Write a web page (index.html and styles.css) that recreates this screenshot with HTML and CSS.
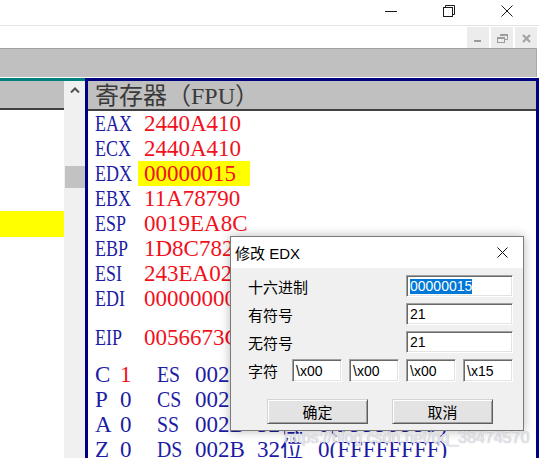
FILE: index.html
```html
<!DOCTYPE html>
<html lang="zh">
<head>
<meta charset="utf-8">
<title>OllyDbg 修改 EDX</title>
<link rel="stylesheet" href="styles.css">
</head>
<body>
<div class="titlebar">
  <span class="capbtn"><svg width="12" height="12" viewBox="0 0 12 12"><path d="M0 6.5H12" stroke="#1a1a1a" stroke-width="1"/></svg></span>
  <span class="capbtn"><svg width="12" height="12" viewBox="0 0 12 12"><rect x="0.5" y="2.5" width="9" height="9" fill="none" stroke="#1a1a1a"/><path d="M2.5 2.5V0.5H11.5V9.5H9.5" fill="none" stroke="#1a1a1a"/></svg></span>
  <span class="capbtn"><svg width="12" height="12" viewBox="0 0 12 12"><path d="M0.5 0.5L11.5 11.5M11.5 0.5L0.5 11.5" stroke="#1a1a1a" stroke-width="1"/></svg></span>
</div>
<div class="mdibar">
  <span class="mdibtn"><svg width="22" height="21" viewBox="0 0 22 21"><rect x="7" y="13" width="7" height="2" fill="#9c9c9c"/></svg></span>
  <span class="mdibtn"><svg width="22" height="21" viewBox="0 0 22 21"><path d="M9.5 9V7.5H16.5V12.5H14" fill="none" stroke="#9c9c9c"/><rect x="9" y="7" width="8" height="2" fill="#9c9c9c"/><rect x="6.5" y="10.5" width="7" height="5" fill="#ececec" stroke="#9c9c9c"/><rect x="6" y="10" width="8" height="2" fill="#9c9c9c"/></svg></span>
  <span class="mdibtn"><svg width="22" height="21" viewBox="0 0 22 21"><path d="M8 8L15 15M15 8L8 15" stroke="#a4a4a4" stroke-width="2.2"/></svg></span>
</div>
<div class="toolbar"></div>
<div class="main">
  <div class="leftpane">
    <div class="list">
      <div class="list-head"></div>
      <div class="list-hl"></div>
    </div>
    <div class="vscroll">
      <div class="vs-arrow"><svg width="10" height="6" viewBox="0 0 10 6"><path d="M1 5.5L5 1.5L9 5.5" fill="none" stroke="#505050" stroke-width="2"/></svg></div>
      <div class="vs-thumb"></div>
    </div>
  </div>
  <div class="regpane">
    <div class="reg-head">寄存器（FPU）</div>
    <div class="reg-body">
      <div class="row"><span class="lbl">EAX</span><span class="val">2440A410</span></div>
      <div class="row"><span class="lbl">ECX</span><span class="val">2440A410</span></div>
      <div class="row"><span class="lbl">EDX</span><span class="val hl">00000015</span></div>
      <div class="row"><span class="lbl">EBX</span><span class="val">11A78790</span></div>
      <div class="row"><span class="lbl">ESP</span><span class="val">0019EA8C</span></div>
      <div class="row"><span class="lbl">EBP</span><span class="val">1D8C7828</span></div>
      <div class="row"><span class="lbl">ESI</span><span class="val">243EA020</span></div>
      <div class="row"><span class="lbl">EDI</span><span class="val">00000000</span></div>
      <div class="row eip"><span class="lbl">EIP</span><span class="val">0056673C</span></div>
      <div class="frow-reg first"><span>C</span><span class="red">1</span><span class="seg">ES</span><span>002B</span><span>32位</span><span>0(FFFFFFFF)</span></div>
      <div class="frow-reg"><span>P</span><span>0</span><span class="seg">CS</span><span>0023</span><span>32位</span><span>0(FFFFFFFF)</span></div>
      <div class="frow-reg"><span>A</span><span>0</span><span class="seg">SS</span><span>002B</span><span>32位</span><span>0(FFFFFFFF)</span></div>
      <div class="frow-reg"><span>Z</span><span>0</span><span class="seg">DS</span><span>002B</span><span>32位</span><span>0(FFFFFFFF)</span></div>
    </div>
  </div>
</div>

<div class="dialog">
  <div class="dlg-title">
    <span class="dlg-caption">修改 EDX</span>
    <svg class="dlg-close" width="11" height="11" viewBox="0 0 11 11"><path d="M0.5 0.5L10.5 10.5M10.5 0.5L0.5 10.5" stroke="#111" stroke-width="1"/></svg>
  </div>
  <div class="dlg-body">
    <div class="frow"><span class="flabel">十六进制</span><div class="field wide"><span class="sel">00000015</span></div></div>
    <div class="frow"><span class="flabel">有符号</span><div class="field wide">21</div></div>
    <div class="frow last"><span class="flabel">无符号</span><div class="field wide">21</div></div>
    <div class="crow">
      <span class="clabel">字符</span>
      <div class="cfields">
        <div class="field ch">\x00</div>
        <div class="field ch">\x00</div>
        <div class="field ch">\x00</div>
        <div class="field ch">\x15</div>
      </div>
    </div>
    <div class="btnrow">
      <button class="btn">确定</button>
      <button class="btn">取消</button>
    </div>
  </div>
</div>

<div class="watermark">https://blog.csdn.net/qq_38474570</div>
</body>
</html>
```

FILE: styles.css
```css
* { box-sizing: border-box; }
html, body { margin: 0; padding: 0; }
body {
  width: 539px;
  height: 458px;
  overflow: hidden;
  position: relative;
  background: #fff;
  font-family: "Liberation Sans", "Noto Sans CJK SC", sans-serif;
}

/* window caption */
.titlebar {
  height: 26px;
  border-bottom: 1px solid #e3e3e3;
  display: flex;
  justify-content: flex-end;
  padding-right: 3px;
}
.capbtn {
  width: 58px;
  height: 21px;
  display: flex;
  align-items: center;
  justify-content: center;
}
.capbtn svg { display: block; }

/* MDI child buttons */
.mdibar {
  height: 22px;
  display: flex;
  justify-content: flex-end;
  gap: 2px;
  padding-top: 1px;
  padding-right: 2px;
}
.mdibtn {
  width: 22px;
  height: 21px;
  background: #ececec;
}
.mdibtn svg { display: block; }

.toolbar {
  height: 29px;
  background: #c0c0c0;
  border-top: 1px solid #a0a0a0;
  border-right: 1px solid #a8a8a8;
  margin-bottom: 1px;
  margin-right: 2px;
}

.main {
  display: flex;
  height: 380px;
}

/* left pane */
.leftpane {
  width: 85px;
  display: flex;
  border-top: 3px solid #008080;
}
.list {
  width: 64px;
}
.list-head {
  height: 29px;
  background: #c0c0c0;
  border-bottom: 2px solid #404040;
}
.list-hl {
  margin-top: 101px;
  height: 26px;
  background: #ffff00;
}
.vscroll {
  width: 21px;
  background: #f0f0f0;
}
.vs-arrow {
  height: 17px;
  display: flex;
  align-items: center;
  justify-content: center;
  padding-left: 1px;
}
.vs-arrow svg { display: block; }
.vs-thumb {
  margin-top: 68px;
  margin-left: 1px;
  width: 20px;
  height: 22px;
  background: #c2c2c2;
}

/* register pane */
.regpane {
  flex: 1;
  border: 3px solid #000080;
  border-bottom: none;
  background: #fff;
}
.reg-head {
  height: 30px;
  background: #c0c0c0;
  border-bottom: 2px solid #404040;
  padding-left: 7px;
  font-family: "Liberation Serif", "Noto Sans CJK SC", serif;
  font-size: 24px;
  line-height: 30px;
  color: #3a3a3a;
  white-space: nowrap;
}
.reg-body {
  font-family: "Liberation Serif", "Noto Sans CJK SC", serif;
  font-size: 23px;
  line-height: 25px;
  color: #1c1ca4;
  white-space: nowrap;
}
.row {
  display: grid;
  grid-template-columns: 43px auto;
  justify-content: start;
  padding-left: 7px;
  height: 25px;
}
.lbl {
  color: #1c1ca4;
  transform: scaleX(0.78);
  transform-origin: 0 50%;
}
.val {
  color: #f2101c;
  padding-left: 6px;
}
.val.hl {
  background: #ffff00;
  width: 112px;
}
.row.eip { margin-top: 14px; }

.frow-reg {
  display: grid;
  grid-template-columns: 25px 37px 38px 62px 61px auto;
  justify-content: start;
  align-items: baseline;
  padding-left: 7px;
  height: 25px;
}
.frow-reg.first { margin-top: 12px; }
.seg {
  transform: scaleX(0.86);
  transform-origin: 0 50%;
}
.red { color: #f2101c; }

/* dialog */
.dialog {
  position: absolute;
  left: 230px;
  top: 236px;
  width: 294px;
  height: 195px;
  border: 1px solid #7a7a7a;
  background: #f0f0f0;
  box-shadow: 0 0 10px rgba(0, 0, 0, 0.28);
  z-index: 2;
}
.dlg-title {
  height: 31px;
  background: #fff;
  display: flex;
  align-items: center;
  padding-left: 4px;
  padding-right: 15px;
  font-size: 15px;
  color: #000;
}
.dlg-close { margin-left: auto; display: block; }
.dlg-body {
  padding: 7px 10px 0 17px;
  font-size: 15px;
  color: #000;
}
.frow {
  display: flex;
  align-items: center;
  height: 22px;
  margin-bottom: 6px;
}
.frow.last { margin-bottom: 6px; }
.flabel { flex: 1; font-family: "Noto Sans CJK SC", sans-serif; }
.field {
  background: #fff;
  border: 1px solid;
  border-color: #a0a0a0 #ffffff #ffffff #a0a0a0;
  box-shadow: inset 1px 1px 0 #696969, inset -1px -1px 0 #e3e3e3;
  font-family: "Liberation Sans", sans-serif;
  font-size: 14px;
  line-height: 18px;
  padding: 1px 3px;
  color: #000;
  white-space: nowrap;
}
.field.wide { width: 107px; height: 22px; }
.sel {
  background: #0078d7;
  color: #fff;
  display: inline-block;
  line-height: 15px;
}
.crow {
  display: flex;
  align-items: center;
  height: 23px;
}
.clabel {
  width: 44px;
  font-family: "Noto Sans CJK SC", sans-serif;
}
.cfields {
  flex: 1;
  display: flex;
  justify-content: space-between;
}
.field.ch { width: 50px; height: 23px; padding-top: 2px; }

.btnrow {
  display: flex;
  gap: 24px;
  padding-left: 19px;
  margin-top: 17px;
}
.btn {
  width: 101px;
  height: 25px;
  background: #e3e3e3;
  border: 1px solid;
  border-color: #d4d4d4 #5e5e5e #5e5e5e #d4d4d4;
  box-shadow: inset 1px 1px 0 #ffffff, inset -1px -1px 0 #a0a0a0;
  font-family: "Noto Sans CJK SC", sans-serif;
  font-size: 15px;
  line-height: 21px;
  color: #000;
  padding: 0;
}

.watermark {
  position: absolute;
  left: 284px;
  top: 428px;
  font-family: "Liberation Sans", sans-serif;
  font-size: 16px;
  line-height: 20px;
  color: rgba(236, 236, 242, 0.9);
  text-shadow: 0 0 1px rgba(90, 90, 110, 0.55);
  z-index: 3;
  white-space: nowrap;
}
```
